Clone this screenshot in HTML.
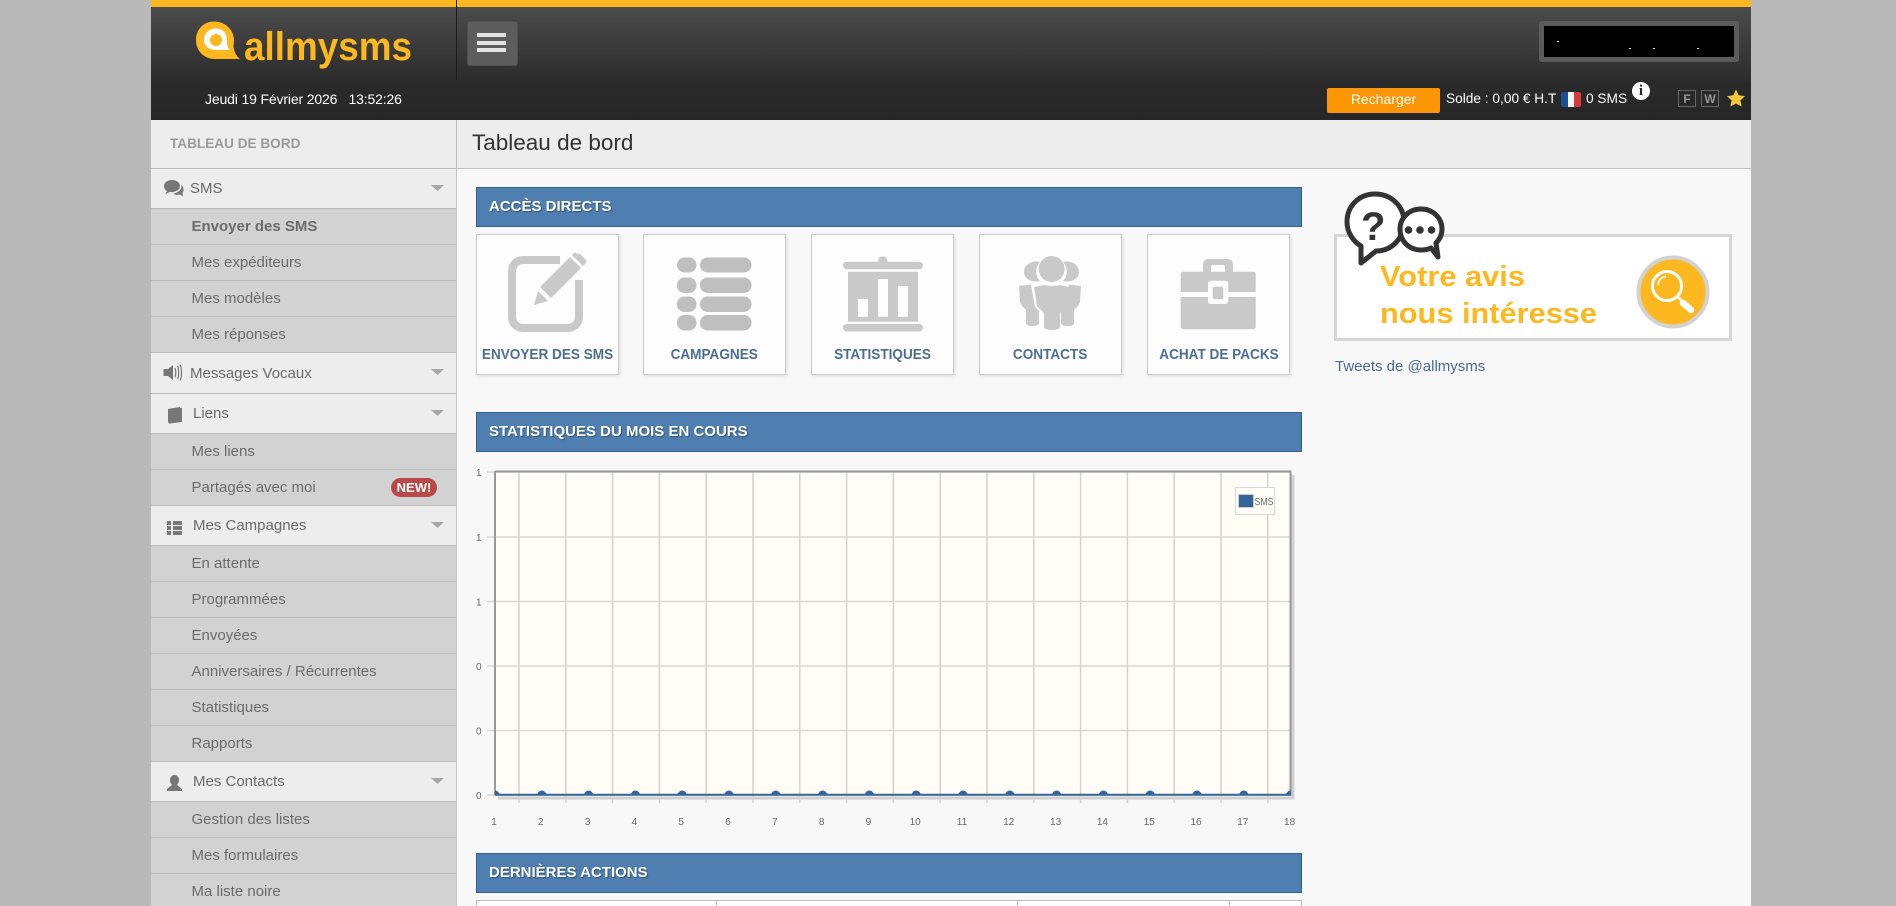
<!DOCTYPE html>
<html lang="fr"><head><meta charset="utf-8"><title>Tableau de bord</title>
<style>
html,body{margin:0;padding:0;width:1896px;height:906px;overflow:hidden;background:#b9b9b9;font-family:"Liberation Sans",sans-serif}
#p{position:absolute;left:0;top:0;width:1896px;height:906px;overflow:hidden}
.a{position:absolute;white-space:nowrap}
svg{position:absolute;left:0;top:0}
.h,.s{position:absolute;left:151px;width:305px;box-sizing:border-box;white-space:nowrap;color:#6b6b6b;font-size:15px}
.h{background:#ededed;border-bottom:1px solid #bbb;z-index:2}
.s{background:#d2d2d2;border-bottom:1px solid #bdbdbd;padding-left:40.500px}
.bar{position:absolute;left:476px;width:826px;height:40px;box-sizing:border-box;background:#4f7eb0;border:1px solid #30618f;color:#fff;font-weight:bold;font-size:15px;line-height:38px;padding-left:12px;text-shadow:1px 1px 1px rgba(0,0,0,.35)}
.tile{position:absolute;top:234px;width:143px;height:141px;box-sizing:border-box;background:#fdfdfd;border:1px solid #cdcdcd;box-shadow:1px 1px 3px rgba(0,0,0,.12);color:#4e6d93;font-weight:bold;font-size:15px;text-align:center;padding-top:109px;line-height:22px;white-space:nowrap}
.tile span{display:inline-block;transform:scaleX(.905);margin:0 -20px}
</style></head><body>
<div id="p">
<div class="a" style="left:151px;top:0;width:1600px;height:906px;background:#f8f8f9"></div>
<!-- header -->
<div class="a" style="left:151px;top:0;width:1600px;height:7px;background:#fdb71f"></div>
<div class="a" style="left:151px;top:7px;width:1600px;height:113px;background:linear-gradient(#4c4c4c 0,#2a2a2a 68%,#262626 100%)"></div>
<div class="a" style="left:456px;top:0;width:1px;height:80px;background:#1c1c1c"></div>
<div class="a" style="left:467px;top:21px;width:51px;height:45px;border-radius:3px;background:#5d5d5d;border:1px solid #505050;box-sizing:border-box"></div>
<div class="a" style="left:477px;top:33px;width:29px;height:4px;background:#e4e4e4"></div>
<div class="a" style="left:477px;top:41px;width:29px;height:4px;background:#e4e4e4"></div>
<div class="a" style="left:477px;top:48px;width:29px;height:4px;background:#e4e4e4"></div>
<svg width="1896" height="906" style="z-index:1">
<path d="M214 21.500C203 21.500 196 30 196 40C196 51 204 59 215 59H240C236 56 234 51 233.500 46C234 43 234 41 234 39C233 29 225 21.500 214 21.500Z" fill="#fdb71f"/>
<path d="M216 28.500C209 28.500 204 33.500 204 40C204 46 209 50 216 50H230C227.500 47.500 227 45 227 40C227 33.500 223 28.500 216 28.500Z" fill="#fff"/>
<circle cx="216" cy="40" r="6" fill="#fdb71f"/>
<text x="244" y="60" font-family="Liberation Sans" font-weight="bold" font-size="40" fill="#fdb71f" textLength="168" lengthAdjust="spacingAndGlyphs">allmysms</text>
</svg>
<div class="a" style="left:205px;top:91px;font-size:14px;line-height:17px;color:#fff;width:200px;letter-spacing:-.15px">Jeudi 19 Février 2026 &nbsp; 13:52:26</div>
<div class="a" style="left:1539px;top:21px;width:200px;height:41px;box-sizing:border-box;background:#000;border:5px solid #5b5b5b;border-radius:3px"></div>
<div class="a" style="left:1557px;top:41px;width:2px;height:1px;background:#fff"></div>
<div class="a" style="left:1629px;top:48px;width:2px;height:1px;background:#ddd"></div>
<div class="a" style="left:1653px;top:48px;width:2px;height:1px;background:#ddc"></div>
<div class="a" style="left:1697px;top:48px;width:2px;height:1px;background:#ddc"></div>
<div class="a" style="left:1327px;top:88px;width:113px;height:25px;background:#fb9504;border-radius:2px;color:#fff;font-size:14px;line-height:22px;text-align:center">Recharger</div>
<div class="a" style="left:1446px;top:90px;font-size:13.7px;line-height:17px;color:#fff">Solde : 0,00 € H.T</div>
<div class="a" style="left:1561px;top:92px;width:20px;height:15px;border-radius:2px;background:linear-gradient(90deg,#1f4f96 0 35%,#f4f4f4 35% 65%,#d63a3c 65%)"></div>
<div class="a" style="left:1586px;top:90px;font-size:13.7px;line-height:17px;color:#fff">0 SMS</div>
<div class="a" style="left:1632px;top:82px;width:18px;height:18px;border-radius:50%;background:#fff;color:#222;font:bold 15px/18px 'Liberation Serif',serif;text-align:center">i</div>
<div class="a" style="left:1678px;top:90px;width:18px;height:17px;box-sizing:border-box;border:1px solid #666;color:#999;font-weight:bold;font-size:12px;line-height:16px;text-align:center">F</div>
<div class="a" style="left:1701px;top:90px;width:18px;height:17px;box-sizing:border-box;border:1px solid #666;color:#999;font-weight:bold;font-size:12px;line-height:16px;text-align:center">W</div>
<svg width="1896" height="906" style="z-index:1"><path d="M1736 89.500L1738.700 95.300L1745 96.100L1740.400 100.400L1741.600 106.500L1736 103.500L1730.400 106.500L1731.600 100.400L1727 96.100L1733.300 95.300Z" fill="#f2c83a"/></svg>

<!-- title row -->
<div class="a" style="left:151px;top:120px;width:305px;height:48px;background:#ededed;border-bottom:1px solid #bbb;color:#9a9a9a;font-weight:bold;font-size:13.6px;line-height:47px;text-indent:19px">TABLEAU DE BORD</div>
<div class="a" style="left:456px;top:120px;width:1294px;height:48px;background:#ededed;border-bottom:1px solid #c4c4c4;border-left:1px solid #bbb;color:#333;font-size:22.500px;line-height:46px;text-indent:15px">Tableau de bord</div>
<div class="a" style="left:456px;top:169px;width:1px;height:737px;background:#c4c4c4"></div>

<!-- sidebar -->
<div class="h" style="top:169px;height:40px;line-height:40px;padding-left:39px">SMS</div>
<div class="s" style="top:209px;height:36px;line-height:36px;font-weight:bold">Envoyer des SMS</div>
<div class="s" style="top:245px;height:36px;line-height:36px">Mes expéditeurs</div>
<div class="s" style="top:281px;height:36px;line-height:36px">Mes modèles</div>
<div class="s" style="top:317px;height:36px;line-height:36px">Mes réponses</div>
<div class="h" style="top:353px;height:41px;line-height:41px;padding-left:39px">Messages Vocaux</div>
<div class="h" style="top:394px;height:40px;line-height:40px;padding-left:42px">Liens</div>
<div class="s" style="top:434px;height:36px;line-height:36px">Mes liens</div>
<div class="s" style="top:470px;height:36px;line-height:35px">Partagés avec moi</div>
<div class="a" style="left:391px;top:478px;width:46px;height:19px;border-radius:10px;background:#b94a48;color:#fff;font-weight:bold;font-size:13px;line-height:19px;text-align:center;z-index:3">NEW!</div>
<div class="h" style="top:506px;height:40px;line-height:40px;padding-left:42px">Mes Campagnes</div>
<div class="s" style="top:546px;height:36px;line-height:36px">En attente</div>
<div class="s" style="top:582px;height:36px;line-height:36px">Programmées</div>
<div class="s" style="top:618px;height:36px;line-height:36px">Envoyées</div>
<div class="s" style="top:654px;height:36px;line-height:36px">Anniversaires / Récurrentes</div>
<div class="s" style="top:690px;height:36px;line-height:36px">Statistiques</div>
<div class="s" style="top:726px;height:36px;line-height:36px">Rapports</div>
<div class="h" style="top:762px;height:40px;line-height:40px;padding-left:42px">Mes Contacts</div>
<div class="s" style="top:802px;height:36px;line-height:36px">Gestion des listes</div>
<div class="s" style="top:838px;height:36px;line-height:36px">Mes formulaires</div>
<div class="s" style="top:874px;height:36px;line-height:36px">Ma liste noire</div>

<svg width="1896" height="906" style="z-index:4">
<g fill="#a6a6a6"><path d="M431 185H444L437.500 191Z"/><path d="M431 369H444L437.500 375Z"/><path d="M431 410H444L437.500 416Z"/><path d="M431 522H444L437.500 528Z"/><path d="M431 778H444L437.500 784Z"/></g>
<g fill="#777">
<path d="M172 180C167 180 164 183 164 186C164 188 165 190 167 191L165.500 194L170 192C175 192.500 180 190 180 186C180 183 177 180 172 180Z"/>
<path d="M181.500 185C182 190 178 193 173 193.500C175 195 178 195 180 194.500L183 196.500L182.500 193C184 191 184 187 181.500 185Z"/>
<path d="M163.500 369H168L173 365V380L168 376H163.500Z"/>
<path d="M168 409L180 407V408H182V422L170 423.500C168.500 423.500 168 422.500 168 421Z"/>
<path d="M167 521H171V525H167ZM173 521H182V525H173ZM167 526H171V530H167ZM173 526H182V530H173ZM167 531H171V535H167ZM173 531H182V535H173Z"/>
<path d="M174.500 775C171.500 775 170 777.500 170 780C170 782.500 171.500 784 172 785L167 789V791H182V789L177 785C177.500 784 179 782.500 179 780C179 777.500 177.500 775 174.500 775Z"/>
</g>
<g fill="none" stroke="#777" stroke-width="1.200"><path d="M175 368C176 370 176 375 175 377M177.500 366C179 369 179 376 177.500 379M180 364.500C182 368 182 377 180 380.500"/></g>
</svg>

<!-- sections -->
<div class="bar" style="top:187px">ACCÈS DIRECTS</div>
<div class="tile" style="left:476px"><span>ENVOYER DES SMS</span></div>
<div class="tile" style="left:643px"><span>CAMPAGNES</span></div>
<div class="tile" style="left:811px"><span>STATISTIQUES</span></div>
<div class="tile" style="left:979px"><span>CONTACTS</span></div>
<div class="tile" style="left:1147px"><span>ACHAT DE PACKS</span></div>
<div class="bar" style="top:412px">STATISTIQUES DU MOIS EN COURS</div>
<div class="bar" style="top:853px">DERNIÈRES ACTIONS</div>

<svg width="1896" height="906" style="z-index:4">
<!-- pencil tile -->
<path d="M560 260H524C516.500 260 512 264.500 512 272V316C512 323.500 516.500 328 524 328H567C574.500 328 579 323.500 579 316V280" fill="none" stroke="#c9c9c9" stroke-width="8"/>
<path d="M534 305L538 291L548 301Z" fill="#c9c9c9"/>
<path d="M540 287L551 298L581 268L570 257Z" fill="#c9c9c9"/>
<path d="M572 255L583 266L586 263Q587 261 586 260L580 254Q578 253 576.500 254L575 252Z" fill="#c9c9c9"/>
<!-- campagnes -->
<g fill="#bfbfbf">
<rect x="677" y="257.500" width="19.500" height="15" rx="7.500"/><rect x="700" y="257.500" width="51.500" height="15" rx="7.500"/>
<rect x="677" y="277.500" width="19.500" height="15.500" rx="7.500"/><rect x="700" y="277.500" width="51.500" height="15.500" rx="7.500"/>
<rect x="677" y="296.500" width="19.500" height="15.500" rx="7.500"/><rect x="700" y="296.500" width="51.500" height="15.500" rx="7.500"/>
<rect x="677" y="315" width="19.500" height="15.500" rx="7.500"/><rect x="700" y="315" width="51.500" height="15.500" rx="7.500"/>
</g>
<!-- stats -->
<g fill="#c9c9c9">
<rect x="843" y="261.700" width="80" height="7.500" rx="3.700"/>
<path d="M878 262V261A4.700 4.700 0 0 1 887.400 261V262Z"/>
<path d="M848 271.700H918V321.700H848ZM858 299V316.700H868V299ZM878 279V316.700H888V279ZM898 286V316.700H908V286Z" fill-rule="evenodd"/>
<rect x="843" y="324" width="80" height="7.500" rx="3.700"/>
</g>
<!-- contacts -->
<g fill="#c9c9c9">
<path d="M1040 262C1032 259.500 1024 265 1024 272C1024 279 1032 283 1040 281C1035 276 1035 267 1040 262Z"/>
<path d="M1063 262C1071 259.500 1079 265 1079 272C1079 279 1071 283 1063 281C1068 276 1068 267 1063 262Z"/>
<circle cx="1051.700" cy="269" r="13"/>
<path d="M1034 287L1045 285C1050 286.500 1054 286.500 1060 285L1069 287L1067 306L1060 313V327C1060 331 1044 331 1044 327V313L1037 306Z"/>
<path d="M1019 286L1031 284.500L1035 307L1039 311V323C1039 327 1026 327 1026 323V310L1022 306L1020 302Z"/>
<path d="M1081 286L1069 284.500L1065 307L1061 311V323C1061 327 1074 327 1074 323V310L1078 306L1080 302Z"/>
</g>
<!-- briefcase -->
<g>
<path d="M1203 272V265C1203 261 1205 259 1209 259H1227C1231 259 1233 261 1233 265V272H1225V267C1225 265.500 1224.500 265 1223 265H1213C1211.500 265 1211 265.500 1211 267V272Z" fill="#c9c9c9"/>
<rect x="1180.700" y="271.700" width="75" height="57.500" rx="2.500" fill="#c9c9c9"/>
<rect x="1180.700" y="292" width="75" height="5" fill="#fdfdfd"/>
<rect x="1208" y="280.700" width="20.300" height="23.300" rx="3" fill="#fdfdfd"/>
<rect x="1212.700" y="286.700" width="10.600" height="12.600" rx="2" fill="#c9c9c9"/>
</g>
<!-- banner -->
<rect x="1335.500" y="235.500" width="395" height="104" fill="#fff" stroke="#d6d6d6" stroke-width="3"/>
<text x="1380" y="286" font-family="Liberation Sans" font-weight="bold" font-size="29" fill="#fdb71f" textLength="145" lengthAdjust="spacingAndGlyphs">Votre avis</text>
<text x="1380" y="323" font-family="Liberation Sans" font-weight="bold" font-size="29" fill="#fdb71f" textLength="217" lengthAdjust="spacingAndGlyphs">nous intéresse</text>
<circle cx="1673" cy="292" r="34.500" fill="#fdb71f" stroke="#d2d2d2" stroke-width="4"/>
<circle cx="1667" cy="286" r="14.500" fill="none" stroke="#fff" stroke-width="3"/>
<path d="M1658 285C1658.500 280 1661.500 277 1666 276.500" fill="none" stroke="#fff" stroke-width="1.800"/>
<path d="M1678 297L1682 301" stroke="#fff" stroke-width="2.500"/>
<path d="M1683 303L1691 310" stroke="#fff" stroke-width="6.500" stroke-linecap="round"/>
<!-- bubbles -->
<path d="M1375 194C1359 194 1347 206 1347 222C1347 233 1354 242 1361 246L1361 263L1376 251C1392 251 1404 238 1404 222C1404 206 1391 194 1375 194Z" fill="#fff" stroke="#333" stroke-width="5" stroke-linejoin="round"/>
<path d="M1421 209C1409 209 1400 218 1400 229C1400 241 1409 250 1421 250C1425 250 1429 249 1431 248L1438 257L1436 243C1440 239 1442 234 1442 229C1442 218 1433 209 1421 209Z" fill="#fff" stroke="#333" stroke-width="5" stroke-linejoin="round"/>
<text x="1361" y="240" font-family="Liberation Sans" font-weight="bold" font-size="40" fill="#333">?</text>
<g fill="#333"><circle cx="1408.500" cy="230" r="3.800"/><circle cx="1420" cy="230" r="3.800"/><circle cx="1431.500" cy="230" r="3.800"/></g>
</svg>
<div class="a" style="left:1335px;top:358px;font-size:15px;line-height:18px;color:#4a6a90;z-index:5">Tweets de @allmysms</div>

<!-- chart -->
<svg width="1896" height="906" style="z-index:4">
<defs><clipPath id="c"><rect x="495" y="780" width="796" height="15"/></clipPath></defs>
<path d="M1293 475V798H498" fill="none" stroke="#000" stroke-opacity=".16" stroke-width="3"/>
<rect x="495" y="472" width="796" height="323" fill="#fffdf6"/>
<path d="M519 472V803M565.800 472V803M612.600 472V803M659.400 472V803M706.200 472V803M753 472V803M799.800 472V803M846.600 472V803M893.400 472V803M940.200 472V803M987 472V803M1033.800 472V803M1080.600 472V803M1127.400 472V803M1174.200 472V803M1221 472V803M1267.800 472V803" stroke="#d4d2ce" stroke-width="1.500" fill="none"/>
<path d="M487 472H1290M487 537H1290M487 601.500H1290M487 666H1290M487 730.500H1290M487 795H1290" stroke="#dad8d4" stroke-width="1.500" fill="none"/>
<path d="M495 471.500H1290.500V796" fill="none" stroke="#999" stroke-width="2"/>
<path d="M495 471V795" fill="none" stroke="#999" stroke-width="2"/>
<path d="M495 794.700H1290.500" stroke="#33659b" stroke-width="2"/>
<g fill="#33659b" clip-path="url(#c)">
<circle cx="495" cy="795" r="4.500"/><circle cx="541.800" cy="795" r="4.500"/><circle cx="588.600" cy="795" r="4.500"/><circle cx="635.400" cy="795" r="4.500"/><circle cx="682.200" cy="795" r="4.500"/><circle cx="729" cy="795" r="4.500"/><circle cx="775.800" cy="795" r="4.500"/><circle cx="822.600" cy="795" r="4.500"/><circle cx="869.400" cy="795" r="4.500"/><circle cx="916.200" cy="795" r="4.500"/><circle cx="963" cy="795" r="4.500"/><circle cx="1009.800" cy="795" r="4.500"/><circle cx="1056.600" cy="795" r="4.500"/><circle cx="1103.400" cy="795" r="4.500"/><circle cx="1150.200" cy="795" r="4.500"/><circle cx="1197" cy="795" r="4.500"/><circle cx="1243.800" cy="795" r="4.500"/><circle cx="1290.600" cy="795" r="4.500"/></g>
<g font-family="Liberation Sans" font-size="10" fill="#666">
<text x="476" y="476">1</text><text x="476" y="541">1</text><text x="476" y="605.500">1</text><text x="476" y="670">0</text><text x="476" y="734.500">0</text><text x="476" y="799">0</text>
</g>
<g font-family="Liberation Sans" font-size="10" fill="#666" text-anchor="middle">
<text x="494" y="825">1</text><text x="540.800" y="825">2</text><text x="587.600" y="825">3</text><text x="634.400" y="825">4</text><text x="681.200" y="825">5</text><text x="728" y="825">6</text><text x="774.800" y="825">7</text><text x="821.600" y="825">8</text><text x="868.400" y="825">9</text><text x="915.200" y="825">10</text><text x="962" y="825">11</text><text x="1008.800" y="825">12</text><text x="1055.600" y="825">13</text><text x="1102.400" y="825">14</text><text x="1149.200" y="825">15</text><text x="1196" y="825">16</text><text x="1242.800" y="825">17</text><text x="1289.600" y="825">18</text>
</g>
<rect x="1235.500" y="487.500" width="39" height="27" fill="#fffef9" stroke="#d6d6d6"/>
<rect x="1238.500" y="494.500" width="15" height="13" fill="#33659b" stroke="#ccc"/>
<text x="1254.500" y="505" font-family="Liberation Sans" font-size="10" fill="#666" textLength="19" lengthAdjust="spacingAndGlyphs">SMS</text>
<!-- table -->
<rect x="476.500" y="900.500" width="825" height="10" fill="#fff" stroke="#bbb"/>
<path d="M716.500 900V906M1017.500 900V906M1229.500 900V906" stroke="#bbb"/>
</svg>
</div>
</body></html>
